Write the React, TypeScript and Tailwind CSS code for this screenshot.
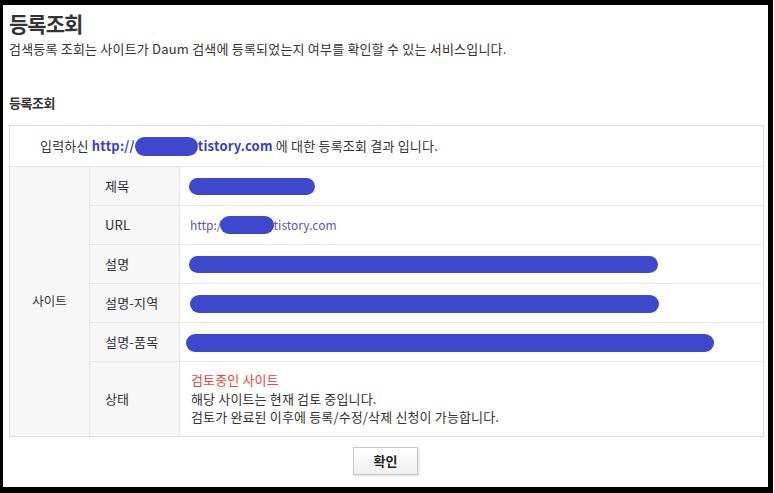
import React from "react";

const font = { fontFamily: '"Noto Sans CJK KR", "Noto Sans", sans-serif' };

function Blob({ className }: { className: string }) {
  return <span className={["inline-block rounded-full bg-[#3f48cc]", className].join(" ")} />;
}

type Row = { label: string; value: React.ReactNode };

const rows: Row[] = [
  { label: "제목", value: <Blob className="ml-[9px] h-[17px] w-[126px]" /> },
  {
    label: "URL",
    value: (
      <span className="ml-[10px] flex items-center text-[12px] text-[#5c55c0]">
        http:/
        <Blob className="ml-[-2px] h-[18px] w-[54px]" />
        tistory.com
      </span>
    ),
  },
  { label: "설명", value: <Blob className="ml-[9px] h-[17px] w-[469px]" /> },
  { label: "설명-지역", value: <Blob className="ml-[10px] mt-[1px] h-[18px] w-[469px]" /> },
  { label: "설명-품목", value: <Blob className="ml-[6px] mt-[1px] h-[18px] w-[528px]" /> },
];

export default function App() {
  return (
    <div className="h-[493px] w-[774px] bg-white pr-[1px]" style={font}>
      <div className="h-full border-b-[6px] border-l-[3px] border-r-[5px] border-t-[5px] border-black bg-white px-[6px] text-[#333]">
        <h1 className="mt-[4px] h-[28px] text-[21px] font-bold leading-[28px] tracking-[-1px] text-[#333]">등록조회</h1>
        <p className="mt-[3px] text-[13px] leading-[18px] tracking-[0.2px]">
          검색등록 조회는 사이트가 Daum 검색에 등록되었는지 여부를 확인할 수 있는 서비스입니다.
        </p>
        <h2 className="mt-[36px] text-[13px] font-bold leading-[18px] tracking-[-0.5px]">등록조회</h2>

        <div className="mt-[13px] w-[755px] border border-[#ddd]">
          <div className="flex h-[41px] items-center border-b border-[#e6e6e6] pl-[30px] text-[13px] tracking-[0.2px]">
            <span>입력하신&nbsp;</span>
            <span className="font-bold text-[#3d3dcc]">http://</span>
            <Blob className="h-[19px] w-[63px]" />
            <span className="font-bold text-[#3d3dcc]">tistory.com</span>
            <span>&nbsp;에 대한 등록조회 결과 입니다.</span>
          </div>
          <div className="flex">
            <div className="flex w-[80px] items-center justify-center border-r border-[#e6e6e6] bg-[#f7f7f7] text-[12.5px]">
              사이트
            </div>
            <div className="flex-1">
              {rows.map((r) => (
                <div key={r.label} className="flex h-[39px] border-b border-[#e6e6e6]">
                  <div className="flex w-[90px] items-center border-r border-[#e6e6e6] bg-[#f7f7f7] pl-[15px] text-[13px] tracking-[0.2px]">
                    {r.label}
                  </div>
                  <div className="flex flex-1 items-center">{r.value}</div>
                </div>
              ))}
              <div className="flex h-[74px]">
                <div className="flex w-[90px] items-center border-r border-[#e6e6e6] bg-[#f7f7f7] pl-[15px] text-[13px]">
                  상태
                </div>
                <div className="flex flex-1 flex-col justify-center pl-[11px] text-[13px] leading-[18.5px] tracking-[0.15px]">
                  <span className="text-[#f2413a]">검토중인 사이트</span>
                  <span>해당 사이트는 현재 검토 중입니다.</span>
                  <span>검토가 완료된 이후에 등록/수정/삭제 신청이 가능합니다.</span>
                </div>
              </div>
            </div>
          </div>
        </div>

        <div className="mt-[10px] flex justify-center">
          <button className="h-[28px] w-[65px] border border-[#c8c8c8] bg-gradient-to-b from-white to-[#f0f0f0] text-[13px] font-bold text-[#222] shadow-[1px_1px_2px_rgba(0,0,0,0.15)]">
            확인
          </button>
        </div>
      </div>
    </div>
  );
}
